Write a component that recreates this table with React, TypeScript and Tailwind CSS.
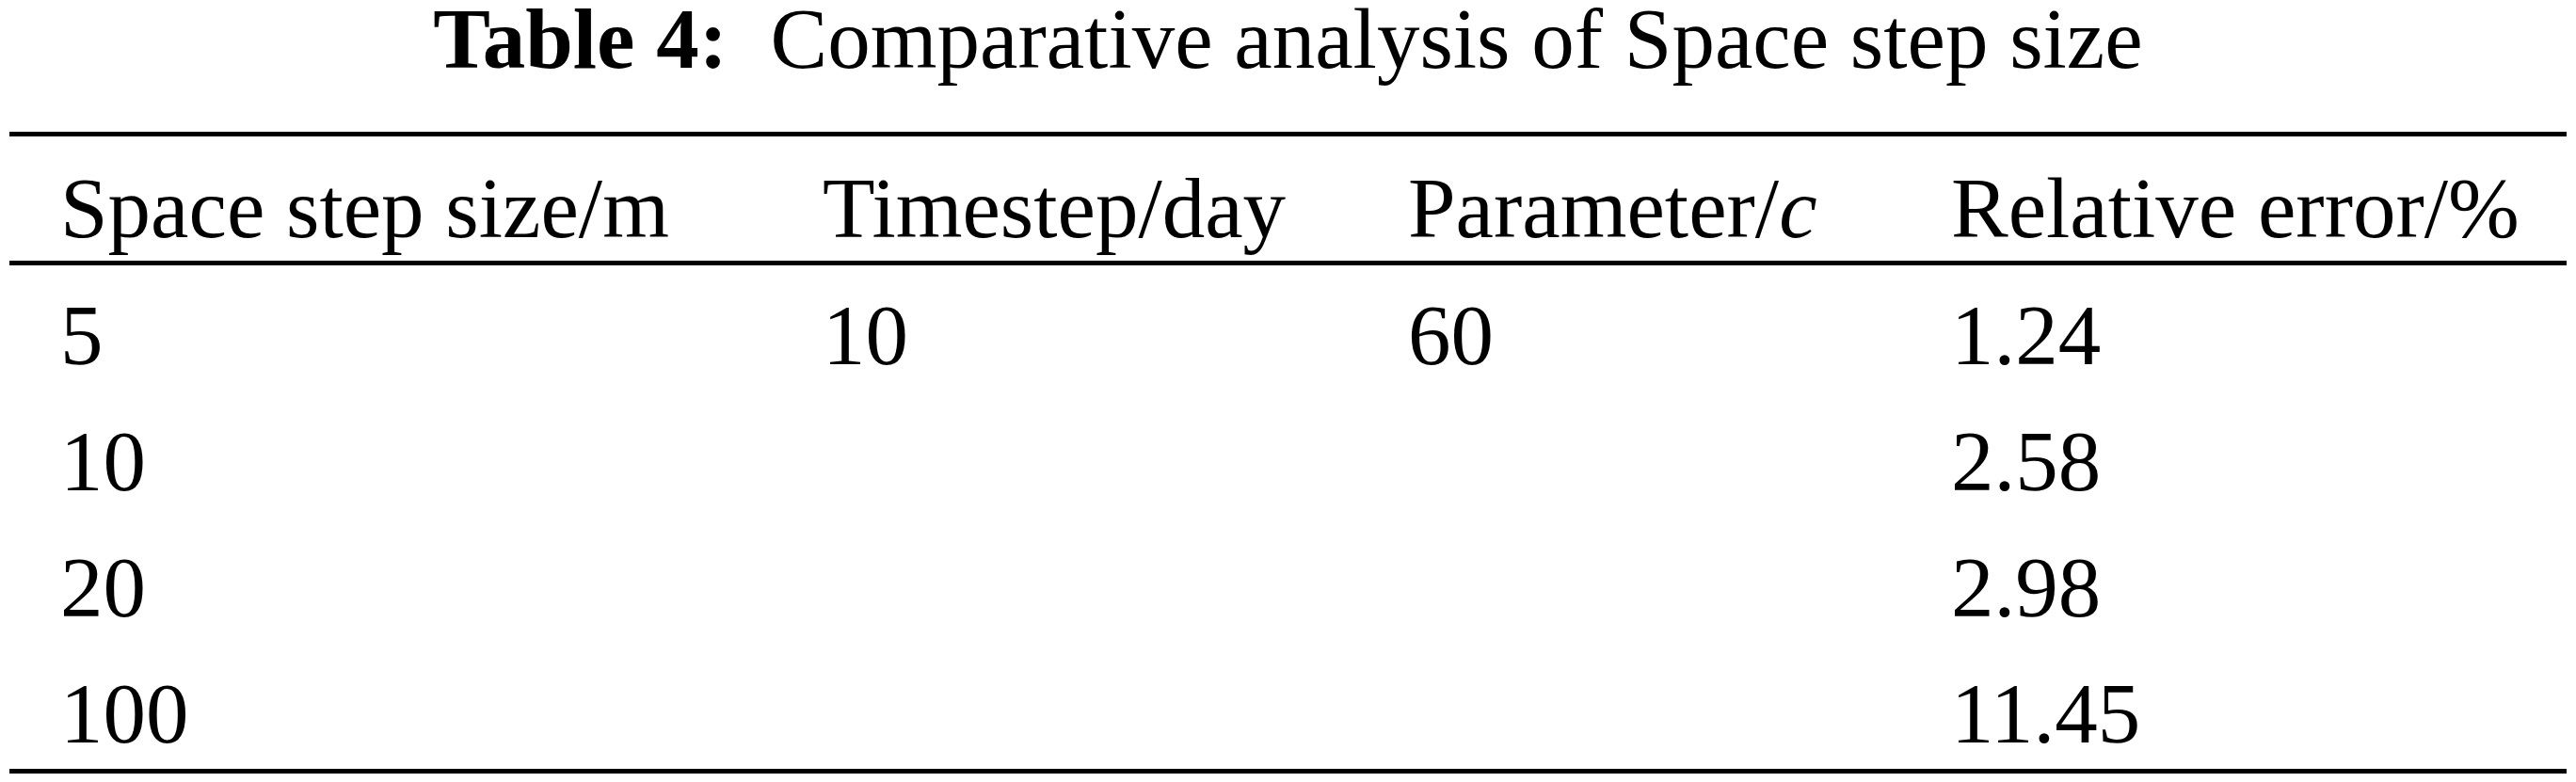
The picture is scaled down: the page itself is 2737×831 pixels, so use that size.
import React from 'react';

const rows = [
  { size: '5', step: '10', param: '60', err: '1.24' },
  { size: '10', step: '', param: '', err: '2.58' },
  { size: '20', step: '', param: '', err: '2.98' },
  { size: '100', step: '', param: '', err: '11.45' },
];

const grid = 'grid grid-cols-[810px_622px_577px_1fr]';

export default function App() {
  return (
    <div className="h-[831px] w-[2737px] bg-white px-[10px] text-black font-['Liberation_Serif','Times_New_Roman',serif] text-[91px]">
      <div className="whitespace-pre pt-[2px] text-center leading-[80px]">
        <span className="font-bold">Table 4:</span>
        <span>{'  '}Comparative analysis of Space step size</span>
      </div>

      <div className="mt-[58px] h-[5px] bg-black" />

      <div className={`${grid} pt-[22px] leading-[110px]`}>
        <div className="pl-[54px]">Space step size/m</div>
        <div className="pl-[54px]">Timestep/day</div>
        <div className="pl-[54px]">
          Parameter/<span className="italic">c</span>
        </div>
        <div className="pl-[54px]">Relative error/%</div>
      </div>

      <div className="h-[5px] bg-black" />

      <div className="flex flex-col gap-[18px] pt-[17px] leading-[116px]">
        {rows.map((r) => (
          <div key={r.size} className={grid}>
            <div className="pl-[54px]">{r.size}</div>
            <div className="pl-[54px]">{r.step}</div>
            <div className="pl-[54px]">{r.param}</div>
            <div className="pl-[54px]">{r.err}</div>
          </div>
        ))}
      </div>

      <div className="h-[5px] bg-black" />
    </div>
  );
}
